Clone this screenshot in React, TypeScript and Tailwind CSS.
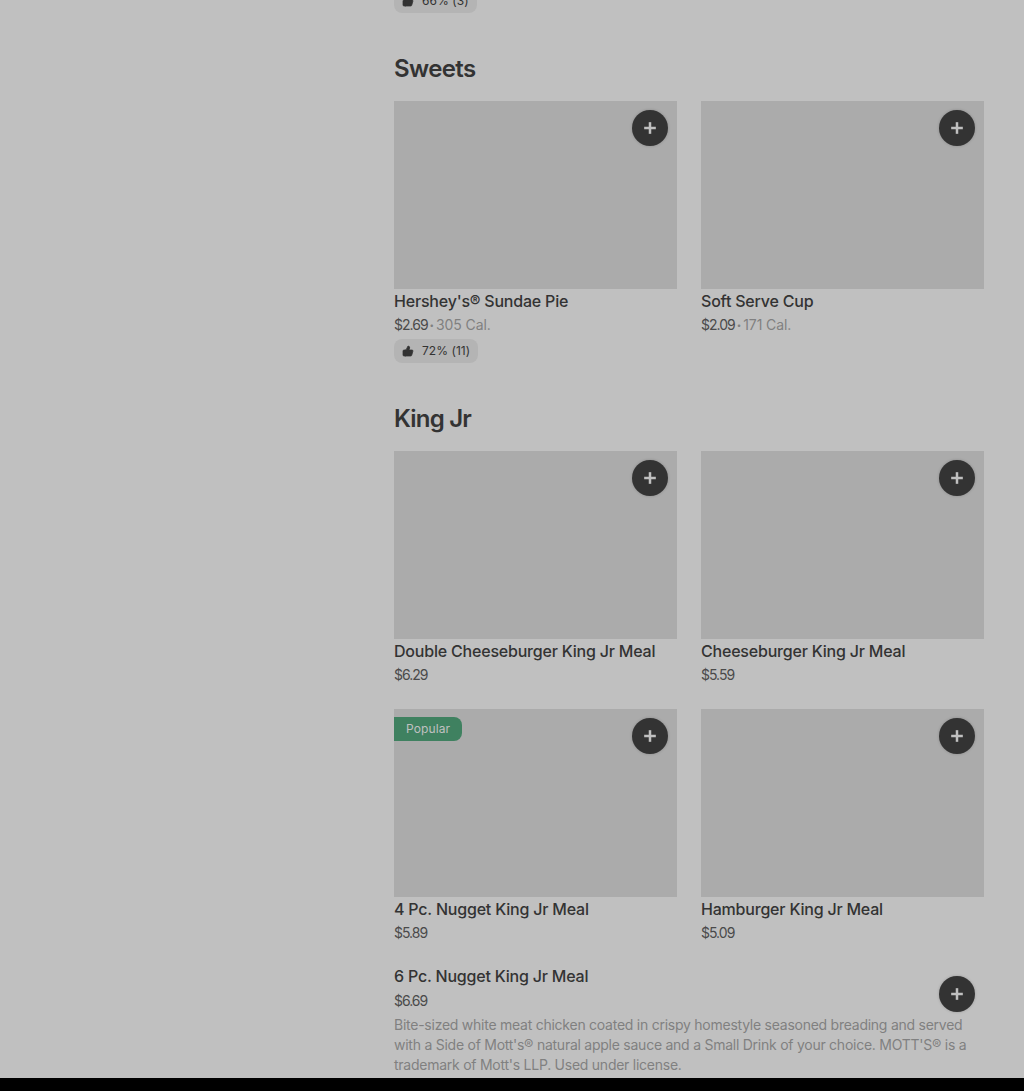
import { Plus, ThumbsUp } from 'lucide-react'

interface Item {
  title: string
  price: string
  cal?: string
  rating?: string
  popular?: boolean
}

function AddButton() {
  return (
    <button className="flex h-9 w-9 items-center justify-center rounded-full bg-[#333333] text-[#c0c0c0] shadow-[0_0_3px_rgba(0,0,0,0.2)]">
      <Plus size={20} strokeWidth={3} strokeLinecap="butt" />
    </button>
  )
}

function RatingPill({ label }: { label: string }) {
  return (
    <div className="flex h-6 w-fit items-center gap-2 rounded-lg bg-[#b4b4b4] px-2 text-xs text-[#333333]">
      <ThumbsUp size={12} fill="currentColor" strokeWidth={1.5} />
      <span className="tracking-[0.05px]">{label}</span>
    </div>
  )
}

function Card({ title, price, cal, rating, popular }: Item) {
  return (
    <div>
      <div className="relative h-[188px] bg-[#ababab]">
        {popular && (
          <div className="absolute left-0 top-2 flex h-6 items-center rounded-r-lg bg-[#3f8160] px-3 text-xs tracking-[0.1px] text-[#c0c0c0]">
            Popular
          </div>
        )}
        <div className="absolute right-[9px] top-[9px]">
          <AddButton />
        </div>
      </div>
      <div className="text-base/6 font-medium tracking-[-0.2px] text-[#333333]">{title}</div>
      <div className="mt-[1px] flex items-center text-sm/[22px] text-[#4a4a4a]">
        <span className="tracking-[-1px]">{price}</span>
        {cal && (
          <>
            <span className="mx-[2px] text-[8px] text-[#808080]">•</span>
            <span className="tracking-[-0.1px] text-[#808080]">{cal}</span>
          </>
        )}
      </div>
      {rating && (
        <div className="mt-[3px]">
          <RatingPill label={rating} />
        </div>
      )}
    </div>
  )
}

const sweets: Item[] = [
  { title: "Hershey's® Sundae Pie", price: '$2.69', cal: '305 Cal.', rating: '72% (11)' },
  { title: 'Soft Serve Cup', price: '$2.09', cal: '171 Cal.' },
]

const kingJr: Item[] = [
  { title: 'Double Cheeseburger King Jr Meal', price: '$6.29' },
  { title: 'Cheeseburger King Jr Meal', price: '$5.59' },
  { title: '4 Pc. Nugget King Jr Meal', price: '$5.89', popular: true },
  { title: 'Hamburger King Jr Meal', price: '$5.09' },
]

export default function App() {
  return (
    <div className="flex h-[1091px] flex-col overflow-hidden bg-[#c0c0c0] font-['Inter',sans-serif]">
      <main className="h-[1078px] shrink-0 overflow-hidden pl-[394px] pr-10">
        <div className="-mt-[11px]">
          <RatingPill label="66% (3)" />
        </div>

        <h2 className="mt-[38px] text-2xl/9 font-semibold tracking-[-0.6px] text-[#333333]">Sweets</h2>
        <div className="mt-[14px] grid h-[262px] grid-cols-2 gap-x-6">
          {sweets.map((item) => (
            <Card key={item.title} {...item} />
          ))}
        </div>

        <h2 className="mt-[38px] text-2xl/9 font-semibold tracking-[-0.8px] text-[#333333]">King Jr</h2>
        <div className="mt-[14px] grid grid-cols-2 gap-x-6 gap-y-[23px]">
          {kingJr.map((item) => (
            <Card key={item.title} {...item} />
          ))}
        </div>

        <div className="relative mt-5 pr-[16px]">
          <div className="text-base/6 font-medium tracking-[-0.2px] text-[#333333]">6 Pc. Nugget King Jr Meal</div>
          <div className="text-sm/[26px] tracking-[-1px] text-[#4a4a4a]">$6.69</div>
          <p className="mt-[1px] text-sm/5 tracking-[-0.25px] text-[#808080]">
            Bite-sized white meat chicken coated in crispy homestyle seasoned breading and served with a Side of
            Mott's® natural apple sauce and a Small Drink of your choice. MOTT'S® is a trademark of Mott's LLP. Used
            under license.
          </p>
          <div className="absolute right-[9px] top-3">
            <AddButton />
          </div>
        </div>
      </main>
      <div className="flex-1 bg-black" />
    </div>
  )
}
